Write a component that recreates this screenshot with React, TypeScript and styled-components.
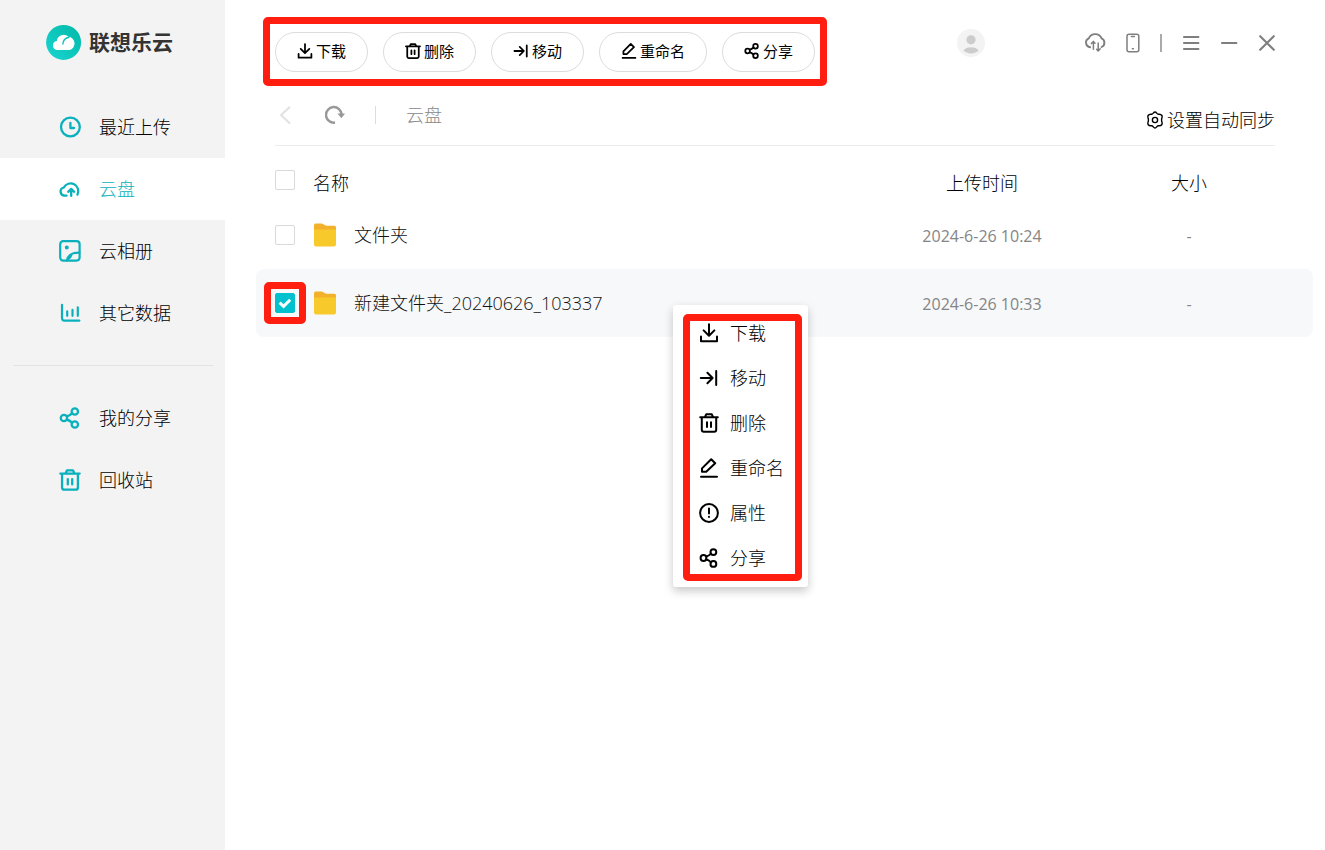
import React, { useState } from "react";
import styled, { createGlobalStyle } from "styled-components";

const TEAL = "#0ab1bd";
const RED = "#ff1e10";

const GlobalStyle = createGlobalStyle`
  *, *::before, *::after { box-sizing: border-box; }
  body {
    margin: 0;
    background: #fff;
    color: #000;
    font-family: "Open Sans", "Noto Sans CJK SC", sans-serif;
    font-size: 18px;
    font-weight: 300;
    line-height: 24px;
  }
  button, input { font: inherit; color: inherit; margin: 0; }
  svg { display: block; flex: none; }
`;

/* ---------- icons ---------- */

type IconProps = { size?: number; weight?: number };

const Line = ({
  size = 20,
  box = 20,
  weight = 2,
  children,
}: IconProps & { box?: number; children: React.ReactNode }) => (
  <svg
    width={size}
    height={size}
    viewBox={`0 0 ${box} ${box}`}
    fill="none"
    stroke="currentColor"
    strokeWidth={weight}
    strokeLinecap="round"
    strokeLinejoin="round"
    aria-hidden="true"
  >
    {children}
  </svg>
);

const DownloadIcon = (p: IconProps) => (
  <Line {...p}>
    <path d="M10 1.3V12.4M4.6 7.4L10 12.8L15.4 7.4M2 13.6V18.3H18V13.6" />
  </Line>
);
const MoveIcon = (p: IconProps) => (
  <Line {...p}>
    <path d="M1.8 10H13.4M8.4 4.8L13.6 10L8.4 15.2M17.2 3V17" />
  </Line>
);
const TrashIcon = (p: IconProps) => (
  <Line {...p}>
    <path d="M1.2 4.2H18.8M6 4L7.2 1.3H12.8L14 4M2.8 4.4V16.8Q2.8 18.8 4.8 18.8H15.2Q17.2 18.8 17.2 16.8V4.4M8 9.2V14M12 9.2V14" />
  </Line>
);
const EditIcon = (p: IconProps) => (
  <Line {...p}>
    <path d="M3 13.8V10.4L12.2 1.2L16.2 5.2L7.2 13.8ZM2 18.7H18" />
  </Line>
);
const InfoIcon = (p: IconProps) => (
  <Line {...p}>
    <circle cx="10" cy="10" r="8.9" />
    <path d="M10 5.6V10.6M10 13.8V14" />
  </Line>
);
const ShareIcon = (p: IconProps) => (
  <Line {...p}>
    <circle cx="4.5" cy="10" r="2.9" />
    <circle cx="14.4" cy="4.1" r="2.9" />
    <circle cx="14.4" cy="15.9" r="2.9" />
    <path d="M7.3 8.4Q9.6 8 12 5.6M7.3 11.6Q9.6 12 12 14.4" />
  </Line>
);
const ClockIcon = () => (
  <Line size={22} box={22} weight={2.3}>
    <circle cx="11.4" cy="11" r="9.4" />
    <path d="M11.4 6.8V12H15" />
  </Line>
);
const CloudUpIcon = () => (
  <Line size={22} box={22} weight={2.3}>
    <path d="M7.6 17.6H5.6A4.1 4.1 0 0 1 4.8 9.5A7.5 7.5 0 1 1 18.4 16.6" />
    <path d="M12.2 17.9V11.2M9.2 13.8L12.2 10.9L15.2 13.8" />
  </Line>
);
const ImageIcon = () => (
  <Line size={22} box={22} weight={2.2}>
    <rect x="1.2" y="1.2" width="19.4" height="19.4" rx="3" />
    <circle cx="7.8" cy="7.6" r=".9" fill="currentColor" />
    <path d="M8 20.4C8.6 15.6 13 12.4 20.4 12.6M8 20.4C10 18.2 11.4 17.8 12.4 14.8" />
  </Line>
);
const ChartIcon = () => (
  <Line size={22} box={22} weight={2.2}>
    <path d="M3 2.8V16Q3 18.6 5.4 18.6H20.4M8.2 9.4V13.8M13.5 7.8V13.8M18.8 5.4V13.8" />
  </Line>
);
const CloudSyncIcon = () => (
  <Line size={22} box={22} weight={1.9}>
    <path d="M6.2 15.2A4.6 4.6 0 0 1 4.8 6.4A6.9 6.9 0 0 1 17.6 6.4A4.7 4.7 0 0 1 17.6 15" />
    <path
      d="M9.4 17.2V9.6M7.4 11.6L9.4 9.4L11 11.2M14.2 11V18.8M12.6 17.2L14.2 19L16.2 16.8"
      strokeWidth="1.5"
    />
  </Line>
);
const PhoneIcon = () => (
  <svg width="14" height="20" viewBox="0 0 14 20" fill="none" stroke="#7f7f7f" strokeWidth="1.5" aria-hidden="true">
    <rect x="1" y="1.2" width="11.8" height="17.6" rx="2" />
    <path d="M5.4 3.6H8.4M6.4 15.8H7.4" strokeLinecap="round" />
  </svg>
);
const MenuIcon = () => (
  <Line size={18} box={18} weight={2.1}>
    <path d="M2 3H16.4M2 9H16.4M2 15H16.4" />
  </Line>
);
const MinusIcon = () => (
  <Line size={18} box={18} weight={2.1}>
    <path d="M2 9H16.4" />
  </Line>
);
const CloseIcon = () => (
  <Line size={18} box={18} weight={2.1}>
    <path d="M2.2 2.2L15.8 15.8M15.8 2.2L2.2 15.8" />
  </Line>
);
const BackIcon = () => (
  <Line size={20} weight={2.2}>
    <path d="M14.4 2.4L6 10L14.4 18" />
  </Line>
);
const RefreshIcon = () => (
  <svg width="20" height="20" viewBox="0 0 20 20" fill="none" aria-hidden="true">
    <path d="M10 17.6A7.8 7.8 0 1 1 16.6 9.6" stroke="#999" strokeWidth="2.5" />
    <path d="M12.4 8.4H20L16.4 13.2Z" fill="#999" />
  </svg>
);
const GearIcon = () => (
  <Line size={18} box={18} weight={1.4}>
    <path d="M5.6 3.3C7.2 3.3 7.4 1 9 1S10.8 3.3 12.4 3.3C14 3.2 14.9 3 15.9 4.5S15.3 7.3 15.6 9C15.3 10.7 16.9 12 15.9 13.5S14 14.8 12.4 14.7C10.8 14.7 10.6 17 9 17S7.2 14.7 5.6 14.7C4 14.8 3.1 15 2.1 13.5S2.7 10.7 2.4 9C2.7 7.3 1.1 6 2.1 4.5S4 3.2 5.6 3.3Z" />
    <circle cx="9" cy="9" r="2.6" />
  </Line>
);
const FolderIcon = () => (
  <svg width="24" height="24" viewBox="0 0 24 24" aria-hidden="true">
    <path d="M1 2.4Q1 .6 2.6 .6H9L13 2.8H21.4Q23 2.8 23 4.6V14H1Z" fill="#f3b02b" />
    <path d="M1 6.6H23V21.6Q23 23.4 21.2 23.4H2.8Q1 23.4 1 21.6Z" fill="#f7c92b" />
  </svg>
);
const AvatarIcon = () => (
  <svg width="28" height="28" viewBox="0 0 28 28" aria-hidden="true">
    <circle cx="14" cy="14" r="14" fill="#f3f3f3" />
    <circle cx="14" cy="10.8" r="4.6" fill="#ccc" />
    <path d="M6.4 21.6Q8.6 18.2 14 18.2T21.6 21.6Q18.8 24.4 14 24.4T6.4 21.6Z" fill="#ccc" />
  </svg>
);
const LogoIcon = () => (
  <svg width="36" height="36" viewBox="0 0 36 36" aria-hidden="true">
    <defs>
      <linearGradient id="logo" x1="0" y1="1" x2="1" y2="0">
        <stop offset="0" stopColor="#1ad6d2" />
        <stop offset="1" stopColor="#00b8a6" />
      </linearGradient>
    </defs>
    <circle cx="17.6" cy="18.4" r="17.5" fill="url(#logo)" />
    <path
      d="M11 26A4.6 4.6 0 0 1 10.8 16.9A6.8 6.8 0 0 1 22.4 12.8A6.7 6.7 0 0 1 23.4 26Z"
      fill="#fff"
    />
    <path d="M16.8 20.6Q17 14 23.4 13.2" fill="none" stroke="#08c4ba" strokeWidth="1.4" />
  </svg>
);

/* ---------- page frame ---------- */

const Page = styled.div`
  display: flex;
  min-height: 100vh;
`;

const Sidebar = styled.aside`
  flex: 0 0 225px;
  padding-top: 24px;
  background: #f3f3f3;
`;

const Brand = styled.h1`
  display: flex;
  align-items: center;
  gap: 7px;
  height: 36px;
  margin: 0 0 36px;
  padding-left: 46px;
  color: #333;
  font-size: 21px;
  font-weight: 700;
`;

const NavItem = styled.a<{ $active?: boolean }>`
  display: flex;
  align-items: center;
  gap: 18px;
  height: 62px;
  padding-left: 59px;
  background: ${(p) => (p.$active ? "#fff" : "transparent")};
  color: ${(p) => (p.$active ? TEAL : "#000")};
  text-decoration: none;
  svg { color: ${TEAL}; }
`;

const NavDivider = styled.hr`
  height: 1px;
  margin: 21px 12px 21px 13px;
  border: 0;
  background: #e2e2e2;
`;

const Main = styled.main`
  position: relative;
  flex: 1;
  min-width: 0;
`;

/* ---------- top bar ---------- */

const TopBar = styled.header`
  display: flex;
  align-items: center;
  padding: 17px 49px 0 38px;
`;

const Toolbar = styled.div`
  display: flex;
  gap: 15px;
  padding: 8px 5px 7px;
  border: 7px solid ${RED};
  border-radius: 5px;
`;

const PillButton = styled.button`
  display: flex;
  align-items: center;
  gap: 3px;
  height: 40px;
  padding: 0 21px 2px;
  border: 1px solid #dcdcdc;
  border-radius: 20px;
  background: #fff;
  font-size: 15px;
  font-weight: 400;
  white-space: nowrap;
`;

const WindowTools = styled.div`
  display: flex;
  align-items: center;
  gap: 20px;
  margin: 0 0 17px auto;
  color: #7f7f7f;
`;

const PlainButton = styled.button<{ $after?: number }>`
  display: flex;
  align-items: center;
  gap: 3px;
  margin-right: ${(p) => p.$after ?? 0}px;
  padding: 0;
  border: 0;
  background: none;
`;

const Separator = styled.span<{ $color: string; $width: number }>`
  width: ${(p) => p.$width}px;
  height: 18px;
  background: ${(p) => p.$color};
`;

/* ---------- path bar ---------- */

const PathBar = styled.div`
  display: flex;
  align-items: center;
  height: 60px;
  margin: 0 50px;
  padding-bottom: 2px;
  border-bottom: 1px solid #ebebf0;
`;

const PathNav = styled.nav`
  display: flex;
  align-items: center;
  gap: 30px;
  color: #999;
`;

const BackButton = styled(PlainButton)`
  color: #e3e3e3;
`;

const PathLink = styled.a`
  color: #888;
  text-decoration: none;
`;

const SyncButton = styled(PlainButton)`
  margin: 10px 0 0 auto;
`;

/* ---------- file table ---------- */

const FileTable = styled.table`
  width: calc(100% - 43px);
  margin-left: 31px;
  border-collapse: separate;
  border-spacing: 0;
  table-layout: fixed;
`;

const HeadCell = styled.th<{ $width?: number; $align?: string }>`
  width: ${(p) => (p.$width ? `${p.$width}px` : "auto")};
  height: 55px;
  padding: 19px 0 0;
  font-weight: 300;
  text-align: ${(p) => p.$align ?? "center"};
`;

const HeadCheckCell = styled(HeadCell)`
  padding: 12px 0 0 19px;
`;

const Row = styled.tr<{ $selected: boolean }>`
  td { background: ${(p) => (p.$selected ? "#f7f8fa" : "transparent")}; }
`;

const Cell = styled.td`
  height: 68px;
  padding: 0;
  &:first-child { padding: 0 0 1px 19px; border-radius: 8px 0 0 8px; }
  &:last-child { border-radius: 0 8px 8px 0; }
`;

const MetaCell = styled(Cell)`
  padding-top: 1px;
  color: #858585;
  font-size: 16px;
  font-weight: 400;
  text-align: center;
`;

const FileName = styled.div`
  display: flex;
  align-items: center;
  gap: 17px;
  color: #111;
`;

const CheckLabel = styled.label`
  position: relative;
  display: grid;
  width: 20px;
  height: 20px;
  > * { grid-area: 1 / 1; }
  svg { pointer-events: none; z-index: 1; }
`;

const CheckInput = styled.input`
  appearance: none;
  width: 20px;
  height: 20px;
  border: 1px solid #d9d9d9;
  border-radius: 2px;
  background: #fff;
  &:checked { border-color: #00c1cd; background: #00c1cd; }
`;

const CheckHighlight = styled.span`
  position: absolute;
  inset: -11px;
  border: 7px solid ${RED};
  border-radius: 5px;
  pointer-events: none;
`;

/* ---------- context menu ---------- */

const ContextMenu = styled.div`
  position: absolute;
  top: 305px;
  left: 448px;
  width: 135px;
  padding: 5px 0 7px;
  border-radius: 3px;
  background: #fff;
  box-shadow: 0 4px 10px rgba(0, 0, 0, 0.22);
`;

const MenuItem = styled.button`
  display: flex;
  align-items: center;
  gap: 11px;
  width: 100%;
  height: 45px;
  padding: 0 0 0 26px;
  border: 0;
  background: none;
  white-space: nowrap;
`;

const MenuHighlight = styled.span`
  position: absolute;
  inset: 9px 6px 6px 10px;
  border: 7px solid ${RED};
  border-radius: 5px;
  pointer-events: none;
`;

type CheckProps = { label: string; checked: boolean; marked?: boolean; onChange: () => void };

const Check = ({ label, checked, marked, onChange }: CheckProps) => (
  <CheckLabel>
    <CheckInput type="checkbox" aria-label={label} checked={checked} onChange={onChange} />
    {checked && (
      <svg width="20" height="20" viewBox="0 0 20 20" fill="none" stroke="#fff" strokeWidth="3" aria-hidden="true">
        <path d="M4.6 9.6L8.6 13.4L15.2 6.8" />
      </svg>
    )}
    {marked && <CheckHighlight />}
  </CheckLabel>
);

const files = [
  { name: "文件夹", time: "2024-6-26 10:24", size: "-" },
  { name: "新建文件夹_20240626_103337", time: "2024-6-26 10:33", size: "-" },
];

const tools = [
  { label: "下载", Icon: DownloadIcon },
  { label: "删除", Icon: TrashIcon },
  { label: "移动", Icon: MoveIcon },
  { label: "重命名", Icon: EditIcon },
  { label: "分享", Icon: ShareIcon },
];

const menu = [
  { label: "下载", Icon: DownloadIcon },
  { label: "移动", Icon: MoveIcon },
  { label: "删除", Icon: TrashIcon },
  { label: "重命名", Icon: EditIcon },
  { label: "属性", Icon: InfoIcon },
  { label: "分享", Icon: ShareIcon },
];

export default function App() {
  const [selected, setSelected] = useState([false, true]);
  const all = selected.every(Boolean);

  return (
    <>
      <GlobalStyle />
      <Page lang="zh-CN">
        <Sidebar>
          <Brand>
            <LogoIcon />
            联想乐云
          </Brand>
          <nav>
            <NavItem href="#recent"><ClockIcon />最近上传</NavItem>
            <NavItem href="#disk" $active><CloudUpIcon />云盘</NavItem>
            <NavItem href="#album"><ImageIcon />云相册</NavItem>
            <NavItem href="#data"><ChartIcon />其它数据</NavItem>
            <NavDivider />
            <NavItem href="#shares"><ShareIcon size={22} weight={2.1} />我的分享</NavItem>
            <NavItem href="#trash"><TrashIcon size={22} weight={2.1} />回收站</NavItem>
          </nav>
        </Sidebar>

        <Main>
          <TopBar>
            <Toolbar>
              {tools.map(({ label, Icon }) => (
                <PillButton key={label} type="button">
                  <Icon size={16} weight={2.2} />
                  {label}
                </PillButton>
              ))}
            </Toolbar>
            <WindowTools>
              <PlainButton type="button" aria-label="账户" $after={79}><AvatarIcon /></PlainButton>
              <PlainButton type="button" aria-label="传输列表"><CloudSyncIcon /></PlainButton>
              <PlainButton type="button" aria-label="手机"><PhoneIcon /></PlainButton>
              <Separator $color="#aaa" $width={2} />
              <PlainButton type="button" aria-label="菜单"><MenuIcon /></PlainButton>
              <PlainButton type="button" aria-label="最小化"><MinusIcon /></PlainButton>
              <PlainButton type="button" aria-label="关闭"><CloseIcon /></PlainButton>
            </WindowTools>
          </TopBar>

          <PathBar>
            <PathNav>
              <BackButton type="button" aria-label="返回"><BackIcon /></BackButton>
              <PlainButton type="button" aria-label="刷新"><RefreshIcon /></PlainButton>
              <Separator $color="#dcdcdf" $width={1} />
              <PathLink href="#disk">云盘</PathLink>
            </PathNav>
            <SyncButton type="button"><GearIcon />设置自动同步</SyncButton>
          </PathBar>

          <FileTable>
            <thead>
              <tr>
                <HeadCheckCell $width={57}>
                  <Check label="全选" checked={all} onChange={() => setSelected(selected.map(() => !all))} />
                </HeadCheckCell>
                <HeadCell $align="left">名称</HeadCell>
                <HeadCell $width={166}>上传时间</HeadCell>
                <HeadCell $width={248}>大小</HeadCell>
              </tr>
            </thead>
            <tbody>
              {files.map((file, i) => (
                <Row key={file.name} $selected={selected[i]}>
                  <Cell>
                    <Check
                      label={file.name}
                      checked={selected[i]}
                      marked={i === 1}
                      onChange={() => setSelected(selected.map((s, n) => (n === i ? !s : s)))}
                    />
                  </Cell>
                  <Cell>
                    <FileName><FolderIcon />{file.name}</FileName>
                  </Cell>
                  <MetaCell>{file.time}</MetaCell>
                  <MetaCell>{file.size}</MetaCell>
                </Row>
              ))}
            </tbody>
          </FileTable>

          <ContextMenu role="menu">
            {menu.map(({ label, Icon }) => (
              <MenuItem key={label} type="button" role="menuitem">
                <Icon />
                {label}
              </MenuItem>
            ))}
            <MenuHighlight />
          </ContextMenu>
        </Main>
      </Page>
    </>
  );
}
